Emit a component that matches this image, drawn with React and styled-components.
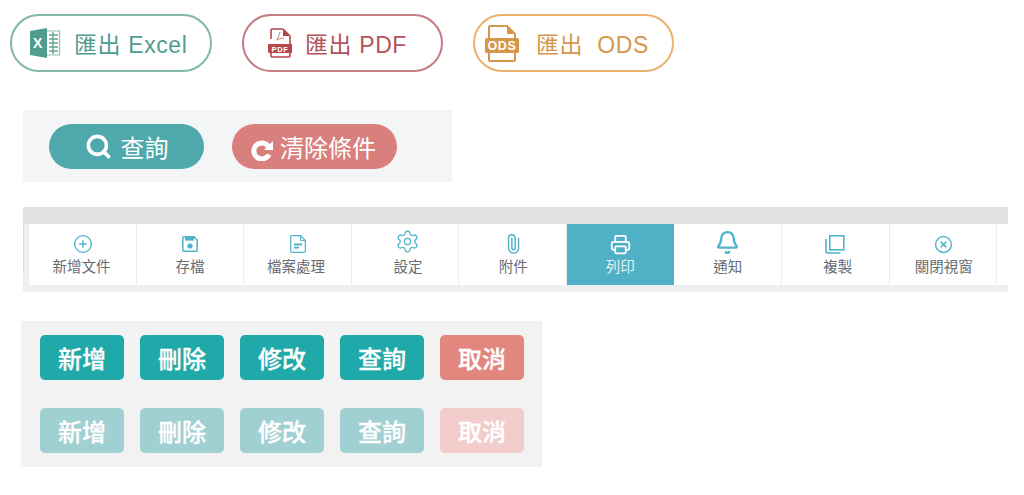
import React from 'react'
import styled, { createGlobalStyle } from 'styled-components'
import { Search, CirclePlus, Settings, Paperclip, Printer, Bell, CircleX } from 'lucide-react'

const GlobalStyle = createGlobalStyle`
  body {
    margin: 0;
    background: #fff;
    font-family: "Liberation Sans", "Noto Sans CJK TC", sans-serif;
  }
`

const Page = styled.div`
  width: 1024px;
  height: 495px;
  overflow: hidden;
`

const ExportRow = styled.div`
  display: flex;
  padding: 14px 0 0 10px;
  gap: 30px;
`

const ExportButton = styled.button`
  box-sizing: border-box;
  display: flex;
  align-items: center;
  width: ${p => p.$width}px;
  height: 58px;
  padding: 0 0 0 ${p => p.$pad}px;
  background: #fff;
  border: 2px solid ${p => p.$border};
  border-radius: 29px;
  color: ${p => p.$color};
  font: 400 23px "Liberation Sans", "Noto Sans CJK TC", sans-serif;
  letter-spacing: 0.6px;
  white-space: pre;
`

const ExportLabel = styled.span`
  margin-left: ${p => p.$gap}px;
`

const SearchPanel = styled.div`
  box-sizing: border-box;
  display: flex;
  gap: 28px;
  width: 429px;
  height: 72px;
  margin: 38px 0 0 23px;
  padding: 14px 26px;
  background: #f4f5f6;
`

const PillButton = styled.button`
  display: flex;
  align-items: center;
  justify-content: center;
  gap: ${p => p.$gap}px;
  width: ${p => p.$width}px;
  height: 45px;
  padding: 0 ${p => p.$right || 0}px 0 0;
  border: 0;
  border-radius: 23px;
  background: ${p => p.$bg};
  color: #fff;
  font: 400 24px "Liberation Sans", "Noto Sans CJK TC", sans-serif;
`

const Toolbar = styled.div`
  box-sizing: border-box;
  width: 985px;
  height: 85px;
  margin: 25px 0 0 23px;
  padding: 17px 0 7px;
  background:
    linear-gradient(#cfe0ea, #cfe0ea) 0 17px / 1px 48px no-repeat,
    linear-gradient(#e2e2e2 17px, #ecf0f3 17px);
`

const ToolList = styled.div`
  display: flex;
  height: 61px;
  margin-left: 6px;
  padding-right: 11px;
  background: #fff;
`

const ToolItem = styled.div`
  box-sizing: border-box;
  display: flex;
  flex-direction: column;
  align-items: center;
  width: ${p => (p.$first ? 108 : 107.75)}px;
  padding-top: 9px;
  border-right: 1.5px solid ${p => (p.$active ? '#4fb0c6' : '#e8ecef')};
  background: ${p => (p.$active ? '#4fb0c6' : '#fff')};
  color: ${p => (p.$active ? '#e4f3f7' : '#666c75')};
  font-size: 14.5px;
  line-height: 20px;
`

const ToolIcon = styled.div`
  display: flex;
  align-items: center;
  justify-content: center;
  height: 22px;
  margin-bottom: 2px;
  margin-left: ${p => p.$shift || 0}px;
  color: ${p => (p.$active ? '#fff' : '#4fb3ca')};
`

const ToolLabel = styled.span`
  margin-left: ${p => p.$shift || 0}px;
`

const ActionPanel = styled.div`
  box-sizing: border-box;
  display: grid;
  grid-template-columns: repeat(5, 84px);
  grid-auto-rows: 45px;
  column-gap: 16px;
  row-gap: 28px;
  width: 521px;
  height: 146px;
  margin: 29px 0 0 21px;
  padding: 14px 19px;
  background: #f2f2f2;
`

const ActionButton = styled.button`
  padding: 0;
  border: 0;
  border-radius: 5px;
  background: ${p => p.$bg};
  color: #fff;
  font: 500 24px "Noto Sans CJK TC", sans-serif;
  -webkit-text-stroke: 0.3px #fff;
`

const ClearSvg = styled.svg`
  margin-top: 7px;
`

const ExcelIcon = () => (
  <svg width="31" height="30" viewBox="0 0 31 30">
    <path d="M0 3 L17 0 V30 L0 27 Z" fill="#4f9d8f" />
    <text x="8" y="20" textAnchor="middle" fontSize="14" fontWeight="700" fontFamily="Liberation Sans" fill="#fff">X</text>
    <path d="M17 3 H29.5 V27 H17" fill="none" stroke="#8fbfb4" strokeWidth="1.2" />
    <path d="M19 7 H28 M19 11 H28 M19 15 H28 M19 19 H28 M19 23 H28 M23 4 V26" stroke="#5fa596" strokeWidth="1.4" />
  </svg>
)

const PdfIcon = () => (
  <svg width="24" height="30" viewBox="0 0 24 30">
    <path d="M3 11 V2 Q3 1 4 1 H15 L22 8 V28 Q22 29 21 29 H4 Q3 29 3 28 V24" fill="none" stroke="#b5474d" strokeWidth="1.6" />
    <path d="M15 1 V8 H22 Z" fill="#b5474d" />
    <path d="M9 12 Q12 5 12 4 M9 12 Q14 9 16 11" fill="none" stroke="#c9787d" strokeWidth="1" />
    <rect x="0" y="16" width="24" height="9" rx="1" fill="#b5474d" />
    <text x="12" y="23.5" textAnchor="middle" fontSize="7.5" fontWeight="700" fontFamily="Liberation Sans" fill="#fff">PDF</text>
  </svg>
)

const OdsIcon = () => (
  <svg width="34" height="37" viewBox="0 0 34 37">
    <path d="M4 13 V2 Q4 1 5 1 H22 L30 9 V13 M30 28 V35 Q30 36 29 36 H5 Q4 36 4 35 V28" fill="none" stroke="#d6974a" strokeWidth="2" />
    <path d="M22 1 V9 H30 Z" fill="#d6974a" />
    <rect x="0" y="13" width="34" height="15" rx="1.5" fill="#d6974a" />
    <text x="17" y="25" textAnchor="middle" fontSize="12.5" fontWeight="700" fontFamily="Liberation Sans" fill="#fff">ODS</text>
  </svg>
)

const ClearIcon = () => (
  <ClearSvg width="22" height="21" viewBox="0 0 22 21">
    <path d="M17.5 6.5 A8 8 0 1 0 18 14.5" fill="none" stroke="currentColor" strokeWidth="5" />
    <path d="M22 1 V10 H13 Z" fill="currentColor" />
  </ClearSvg>
)

const SaveIcon = () => (
  <svg width="16" height="16" viewBox="0 0 16 16">
    <path d="M1.5 0.8 H12 L15.2 4 V14 Q15.2 15.2 14 15.2 H2 Q0.8 15.2 0.8 14 V2 Q0.8 0.8 2 0.8 Z" fill="none" stroke="currentColor" strokeWidth="1.5" />
    <rect x="3" y="1" width="9" height="3.6" fill="currentColor" />
    <circle cx="8" cy="10" r="2.6" fill="currentColor" />
  </svg>
)

const FileIcon = () => (
  <svg width="16" height="18" viewBox="0 0 16 18">
    <path d="M2 0.7 H10.5 L15.3 5.5 V16 Q15.3 17.3 14 17.3 H2 Q0.7 17.3 0.7 16 V2 Q0.7 0.7 2 0.7 Z" fill="none" stroke="currentColor" strokeWidth="1.2" />
    <path d="M10.5 0.7 V5.5 H15.3" fill="none" stroke="currentColor" strokeWidth="1" />
    <path d="M4 8.5 H12 V10.5 H4 Z M4 11.8 H9 V13.4 H4 Z" fill="currentColor" />
  </svg>
)

const CopyIcon = () => (
  <svg width="20" height="19" viewBox="0 0 20 19">
    <rect x="4.8" y="0.8" width="14" height="14" fill="none" stroke="currentColor" strokeWidth="1.6" />
    <path d="M1 4 V16.5 Q1 18 2.5 18 H15.5" fill="none" stroke="currentColor" strokeWidth="1.6" />
  </svg>
)

const GearIcon = styled(Settings)`
  margin-top: -6px;
`

const BellIcon = styled(Bell)`
  margin-top: -3px;
`

const ClipIcon = styled(Paperclip)`
  transform: rotate(-45deg);
`

const tools = [
  { label: '新增文件', icon: <CirclePlus size={20} strokeWidth={1.6} />, iconShift: 2, labelShift: -2 },
  { label: '存檔', icon: <SaveIcon /> },
  { label: '檔案處理', icon: <FileIcon />, labelShift: -3 },
  { label: '設定', icon: <GearIcon size={25} strokeWidth={1.2} />, iconShift: 4, labelShift: 6 },
  { label: '附件', icon: <ClipIcon size={20} strokeWidth={1.7} />, labelShift: 1 },
  { label: '列印', icon: <Printer size={21} strokeWidth={2} />, active: true },
  { label: '通知', icon: <BellIcon size={25} strokeWidth={2.2} /> },
  { label: '複製', icon: <CopyIcon />, labelShift: 5 },
  { label: '關閉視窗', icon: <CircleX size={19} strokeWidth={1.8} />, iconShift: 2, labelShift: 2 },
]

const actions = ['新增', '刪除', '修改', '查詢']

const App = () => {
  return (
    <Page>
      <GlobalStyle />
      <ExportRow>
        <ExportButton $width={202} $pad={18} $border="#82b7ab" $color="#4f9d8f">
          <ExcelIcon />
          <ExportLabel $gap={13}>匯出 Excel</ExportLabel>
        </ExportButton>
        <ExportButton $width={201} $pad={24} $border="#c57c82" $color="#b5535a">
          <PdfIcon />
          <ExportLabel $gap={13}>匯出 PDF</ExportLabel>
        </ExportButton>
        <ExportButton $width={201} $pad={10} $border="#ebb26f" $color="#d6974a">
          <OdsIcon />
          <ExportLabel $gap={17}>匯出  ODS</ExportLabel>
        </ExportButton>
      </ExportRow>

      <SearchPanel>
        <PillButton $width={155} $gap={9} $bg="#4fa9ac">
          <Search size={27} strokeWidth={3.2} />
          查詢
        </PillButton>
        <PillButton $width={165} $gap={7} $right={2} $bg="#d97f7d">
          <ClearIcon />
          清除條件
        </PillButton>
      </SearchPanel>

      <Toolbar>
        <ToolList>
          {tools.map((t, i) => (
            <ToolItem key={t.label} $first={i === 0} $active={t.active}>
              <ToolIcon $active={t.active} $shift={t.iconShift}>{t.icon}</ToolIcon>
              <ToolLabel $shift={t.labelShift}>{t.label}</ToolLabel>
            </ToolItem>
          ))}
        </ToolList>
      </Toolbar>

      <ActionPanel>
        {actions.map(a => <ActionButton key={a} $bg="#20a9a9">{a}</ActionButton>)}
        <ActionButton $bg="#e2867e">取消</ActionButton>
        {actions.map(a => <ActionButton key={a} $bg="#a1d0d2">{a}</ActionButton>)}
        <ActionButton $bg="#f2cdcc">取消</ActionButton>
      </ActionPanel>
    </Page>
  )
}

export default App
